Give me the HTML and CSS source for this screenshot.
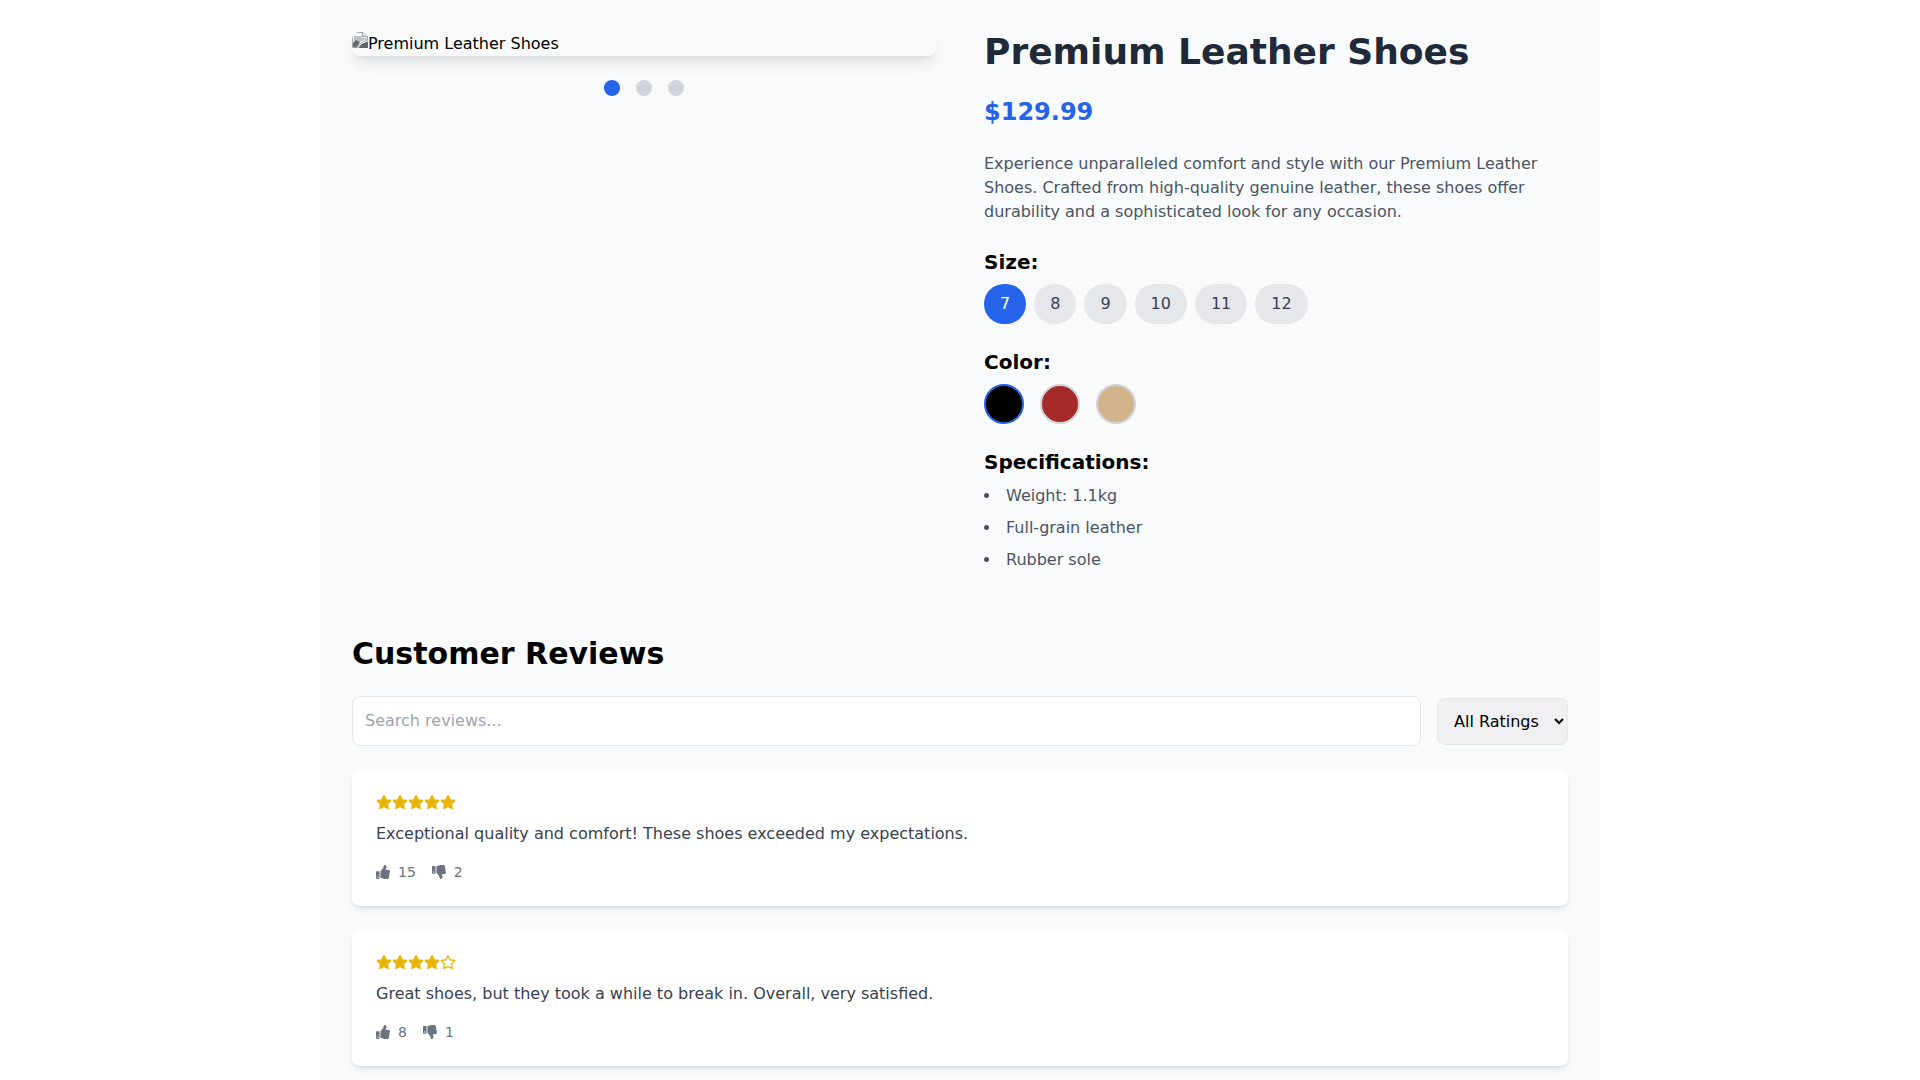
FILE: index.html
```html
<!DOCTYPE html>
<html lang="en">
<head>
  <meta charset="UTF-8">
  <title>Premium Leather Shoes</title>
  <link rel="stylesheet" href="styles.css">
</head>
<body>
  <div class="container">
    <div class="product">
      <div class="gallery">
        <div class="photo">
          <svg class="broken" width="16" height="16" viewBox="0 0 16 16">
            <path d="M0.500 0.500h10l5 4v4L10 10l-3 3-1 2.500H0.500z" fill="#f4f5f6" stroke="#a2a5a8"/>
            <path d="M10.500 0.500v4h5" fill="#dfe1e3" stroke="#a2a5a8"/>
            <path d="M2 4h8v2h5v1.500L9 9 6 12H2z" fill="#bfc2c5"/>
            <path d="M1 15v-4l3-3 4 2-3 5z" fill="#666b70"/>
            <path d="M16 9.500V16H6.500l3-4z" fill="#5f6468"/>
          </svg>Premium Leather Shoes
        </div>
        <div class="dots">
          <span class="dot active"></span>
          <span class="dot"></span>
          <span class="dot"></span>
        </div>
      </div>
      <div class="info">
        <h1>Premium Leather Shoes</h1>
        <p class="price">$129.99</p>
        <p class="desc">Experience unparalleled comfort and style with our Premium Leather Shoes. Crafted from high-quality genuine leather, these shoes offer durability and a sophisticated look for any occasion.</p>

        <h3>Size:</h3>
        <div class="sizes">
          <button class="size selected">7</button>
          <button class="size">8</button>
          <button class="size">9</button>
          <button class="size">10</button>
          <button class="size">11</button>
          <button class="size">12</button>
        </div>

        <h3>Color:</h3>
        <div class="colors">
          <span class="swatch black selected"></span>
          <span class="swatch brown"></span>
          <span class="swatch tan"></span>
        </div>

        <h3>Specifications:</h3>
        <ul class="specs">
          <li>Weight: 1.1kg</li>
          <li>Full-grain leather</li>
          <li>Rubber sole</li>
        </ul>
      </div>
    </div>

    <h2>Customer Reviews</h2>
    <div class="filters">
      <input class="search" type="text" placeholder="Search reviews...">
      <select class="rating-select">
        <option>All Ratings</option>
      </select>
    </div>

    <div class="review">
      <div class="stars">
        <svg viewBox="0 0 576 512"><use href="#star"/></svg>
        <svg viewBox="0 0 576 512"><use href="#star"/></svg>
        <svg viewBox="0 0 576 512"><use href="#star"/></svg>
        <svg viewBox="0 0 576 512"><use href="#star"/></svg>
        <svg viewBox="0 0 576 512"><use href="#star"/></svg>
      </div>
      <p>Exceptional quality and comfort! These shoes exceeded my expectations.</p>
      <div class="votes">
        <span class="vote"><svg viewBox="0 0 512 512"><use href="#up"/></svg>15</span>
        <span class="vote"><svg viewBox="0 0 512 512"><use href="#down"/></svg>2</span>
      </div>
    </div>

    <div class="review">
      <div class="stars">
        <svg viewBox="0 0 576 512"><use href="#star"/></svg>
        <svg viewBox="0 0 576 512"><use href="#star"/></svg>
        <svg viewBox="0 0 576 512"><use href="#star"/></svg>
        <svg viewBox="0 0 576 512"><use href="#star"/></svg>
        <svg viewBox="0 0 576 512"><use href="#star-empty"/></svg>
      </div>
      <p>Great shoes, but they took a while to break in. Overall, very satisfied.</p>
      <div class="votes">
        <span class="vote"><svg viewBox="0 0 512 512"><use href="#up"/></svg>8</span>
        <span class="vote"><svg viewBox="0 0 512 512"><use href="#down"/></svg>1</span>
      </div>
    </div>
  </div>

  <svg class="defs" width="0" height="0">
    <defs>
      <path id="star" d="M259.300 17.800L194 150.200 47.900 171.500c-26.200 3.800-36.700 36.100-17.700 54.600l105.700 103-25 145.500c-4.500 26.300 23.200 46 46.400 33.700L288 439.600l130.700 68.700c23.200 12.200 50.900-7.400 46.400-33.700l-25-145.500 105.700-103c19-18.500 8.500-50.800-17.700-54.600L382 150.200 316.700 17.800c-11.700-23.600-45.600-23.900-57.400 0z"/>
      <path id="star-empty" d="M528.100 171.500L382 150.200 316.700 17.800c-11.700-23.600-45.600-23.900-57.400 0L194 150.200 47.900 171.500c-26.200 3.800-36.700 36.100-17.700 54.600l105.700 103-25 145.500c-4.500 26.300 23.200 46 46.400 33.700L288 439.600l130.700 68.700c23.200 12.200 50.900-7.400 46.400-33.700l-25-145.500 105.700-103c19-18.500 8.500-50.800-17.700-54.600zM388.600 312.300l23.700 138.400L288 385.400l-124.300 65.300 23.700-138.400-100.600-98 139-20.200 62.200-126 62.200 126 139 20.200-100.600 98z"/>
      <path id="up" d="M104 224H24c-13.255 0-24 10.745-24 24v240c0 13.255 10.745 24 24 24h80c13.255 0 24-10.745 24-24V248c0-13.255-10.745-24-24-24zM64 472c-13.255 0-24-10.745-24-24s10.745-24 24-24 24 10.745 24 24-10.745 24-24 24zM384 81.452c0 42.416-25.970 66.208-33.277 94.548h101.723c33.397 0 59.397 27.746 59.553 58.098.084 17.938-7.546 37.249-19.439 49.197l-.11.11c9.836 23.337 8.237 56.037-9.308 79.469 8.681 25.895-.069 57.704-16.382 74.757 4.298 17.598 2.244 32.575-6.148 44.632C440.202 511.587 389.616 512 346.839 512l-2.845-.001c-48.287-.017-87.806-17.598-119.560-31.725-15.957-7.099-36.821-15.887-52.651-16.178-6.540-.12-11.783-5.457-11.783-11.998v-213.770c0-3.200 1.282-6.271 3.558-8.521 39.614-39.144 56.648-80.587 89.117-113.111 14.804-14.832 20.188-37.236 25.393-58.902C282.515 39.293 291.817 0 312 0c24 0 72 8 72 81.452z"/>
      <path id="down" d="M0 56v240c0 13.255 10.745 24 24 24h80c13.255 0 24-10.745 24-24V56c0-13.255-10.745-24-24-24H24C10.745 32 0 42.745 0 56zm40 200c0-13.255 10.745-24 24-24s24 10.745 24 24-10.745 24-24 24-24-10.745-24-24zm272 256c-20.183 0-29.485-39.293-33.931-57.795-5.206-21.666-10.589-44.070-25.393-58.902-32.469-32.524-49.503-73.967-89.117-113.111a11.980 11.980 0 0 1-3.558-8.521V59.901c0-6.541 5.243-11.878 11.783-11.998 15.831-.29 36.694-9.079 52.651-16.178C256.189 17.598 295.709.017 343.995 0h2.844c42.777 0 93.363.413 113.774 29.737 8.392 12.057 10.446 27.034 6.148 44.632 16.312 17.053 25.063 48.863 16.382 74.757 17.544 23.432 19.143 56.132 9.308 79.469l.11.11c11.893 11.949 19.523 31.259 19.439 49.197-.156 30.352-26.157 58.098-59.553 58.098H350.723C358.030 364.340 384 388.132 384 430.548 384 504 336 512 312 512z"/>
    </defs>
  </svg>
</body>
</html>
```
FILE: styles.css
```css
* {
  box-sizing: border-box;
}
body {
  margin: 0;
  background-color: #ffffff;
  color: #000000;
  font-family: "DejaVu Sans", sans-serif;
  font-size: 16px;
  line-height: 24px;
}
.container {
  width: 1280px;
  margin: 0 auto;
  padding: 32px;
  background-color: #f9fafb;
}
.product {
  display: grid;
  grid-template-columns: 1fr 1fr;
  gap: 48px;
  margin-bottom: 64px;
}
.photo {
  height: 24px;
  border-radius: 8px;
  box-shadow: 0 10px 15px -3px rgba(0, 0, 0, 0.1), 0 4px 6px -4px rgba(0, 0, 0, 0.1);
  white-space: nowrap;
  overflow: hidden;
}
.broken {
  vertical-align: 1px;
}
.dots {
  display: flex;
  justify-content: center;
  gap: 16px;
  margin-top: 24px;
}
.dot {
  width: 16px;
  height: 16px;
  border-radius: 50%;
  background-color: #d1d5db;
}
.dot.active {
  background-color: #2563eb;
}
h1 {
  margin: 0 0 24px;
  font-size: 36px;
  line-height: 40px;
  color: #1f2937;
}
.price {
  margin: 0 0 24px;
  font-size: 24px;
  line-height: 32px;
  font-weight: bold;
  color: #2563eb;
}
.desc {
  margin: 0 0 24px;
  color: #4b5563;
}
h3 {
  margin: 0 0 8px;
  font-size: 20px;
  line-height: 28px;
}
.sizes {
  display: flex;
  gap: 8px;
  margin-bottom: 24px;
}
.size {
  height: 40px;
  padding: 8px 16px;
  border: none;
  border-radius: 9999px;
  background-color: #e5e7eb;
  color: #374151;
  font-family: inherit;
  font-size: 16px;
  line-height: 24px;
}
.size.selected {
  background-color: #2563eb;
  color: #ffffff;
}
.colors {
  display: flex;
  gap: 16px;
  margin-bottom: 24px;
}
.swatch {
  width: 40px;
  height: 40px;
  border-radius: 50%;
  border: 2px solid #d1d5db;
}
.swatch.selected {
  border-color: #2563eb;
}
.black {
  background-color: #000000;
}
.brown {
  background-color: #a52a2a;
}
.tan {
  background-color: #d2b48c;
}
.specs {
  margin: 0;
  padding: 0;
  list-style: none;
  color: #4b5563;
}
.specs li {
  display: flex;
  margin-bottom: 8px;
}
.specs li::before {
  content: "";
  flex: none;
  width: 5px;
  height: 5px;
  margin: 9px 17px 0 0;
  border-radius: 50%;
  background-color: #4b5563;
}
.specs li:last-child {
  margin-bottom: 0;
}
h2 {
  margin: 0 0 24px;
  font-size: 30px;
  line-height: 36px;
}
.filters {
  display: flex;
  align-items: center;
  gap: 16px;
  margin-bottom: 24px;
}
.search {
  flex: 1;
  height: 50px;
  padding: 11px 12px 13px;
  border: 1px solid #e5e7eb;
  border-radius: 8px;
  background-color: #ffffff;
  font-family: inherit;
  font-size: 16px;
}
.search::placeholder {
  color: #9ca3af;
}
.rating-select {
  height: 47px;
  width: 131px;
  padding: 0 0 0 12px;
  border: 1px solid #e5e7eb;
  border-radius: 8px;
  background-color: #f0f0f2;
  color: #000000;
  font-family: inherit;
  font-size: 16px;
}
.review {
  margin-bottom: 24px;
  padding: 24px;
  border-radius: 8px;
  background-color: #ffffff;
  box-shadow: 0 4px 6px -1px rgba(0, 0, 0, 0.1), 0 2px 4px -2px rgba(0, 0, 0, 0.1);
}
.stars {
  display: flex;
  height: 20px;
  margin-bottom: 8px;
  padding-top: 1px;
}
.stars svg {
  width: 16px;
  height: 14.200px;
  fill: #eab308;
}
.review p {
  margin: 0 0 16px;
  color: #374151;
}
.votes {
  display: flex;
  gap: 16px;
  font-size: 14px;
  line-height: 20px;
  color: #6b7280;
}
.vote {
  display: flex;
  align-items: center;
  gap: 8px;
}
.vote svg {
  width: 14px;
  height: 14px;
  fill: #6b7280;
}
.defs {
  position: absolute;
}
```
